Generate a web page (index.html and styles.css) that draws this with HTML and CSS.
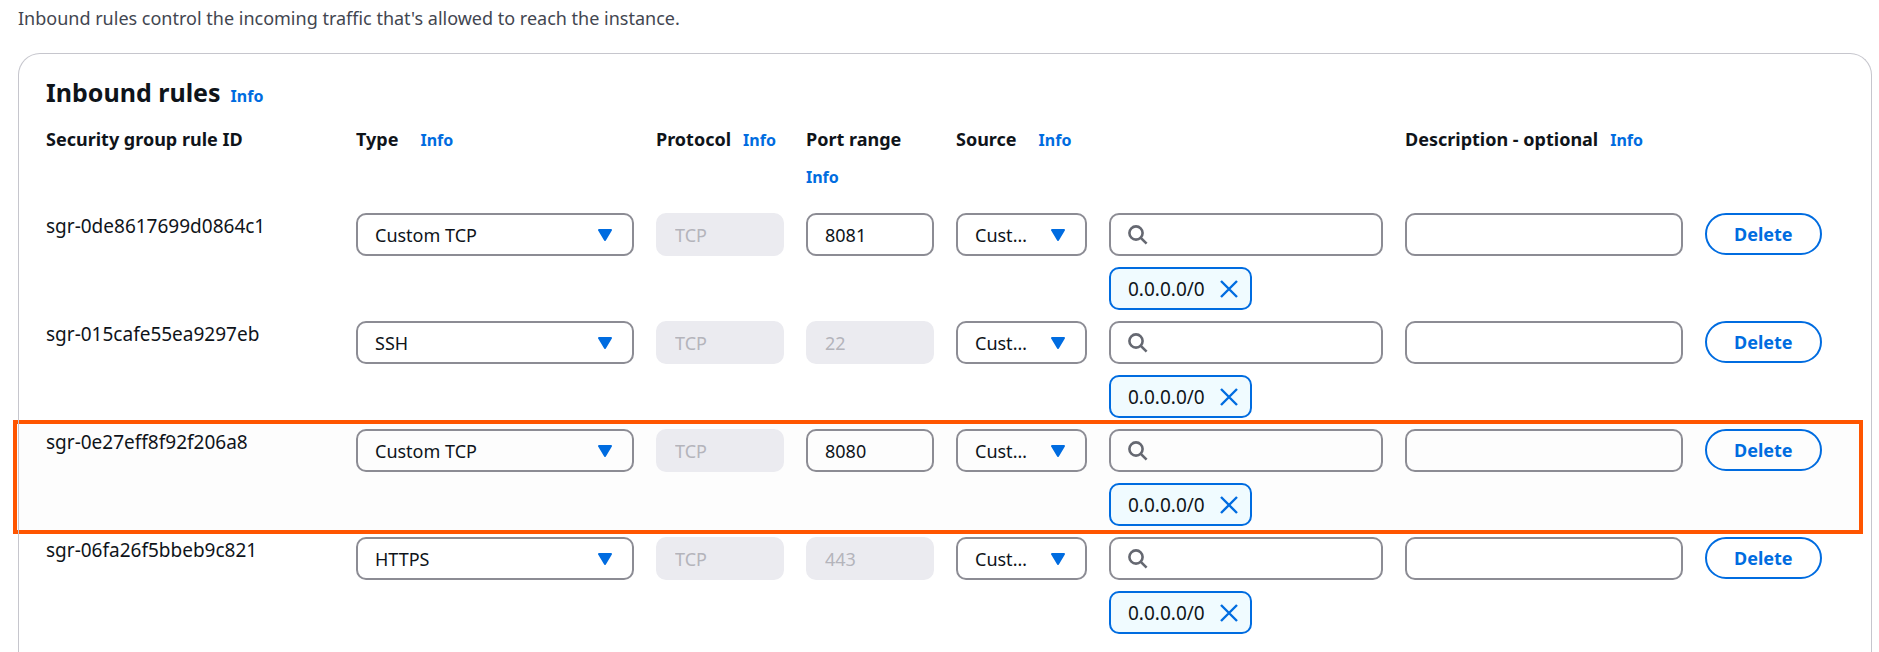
FILE: index.html
```html
<!DOCTYPE html>
<html lang="en">
<head>
<meta charset="utf-8">
<meta name="viewport" content="width=device-width, initial-scale=1">
<title>Inbound rules</title>
<link rel="stylesheet" href="styles.css">
</head>
<body>
<svg class="sprite" aria-hidden="true">
  <symbol id="search" viewBox="0 0 20 20"><circle cx="8" cy="8" r="6.6"/><path d="M12.8 12.8 18.6 18.6"/></symbol>
  <symbol id="close" viewBox="0 0 18 18"><path d="M1 1 17 17M17 1 1 17"/></symbol>
</svg>
<p class="intro">Inbound rules control the incoming traffic that's allowed to reach the instance.</p>
<main class="panel">
  <header class="panel-header">
    <h2 class="title">Inbound rules</h2>
    <a class="info" href="#">Info</a>
  </header>
  <table class="rules">
    <thead>
      <tr class="row head">
        <th class="label">Security group rule ID</th>
        <th class="label wide">Type <a class="info" href="#">Info</a></th>
        <th class="label">Protocol <a class="info" href="#">Info</a></th>
        <th class="label">Port range <a class="info" href="#">Info</a></th>
        <th class="label wide span" colspan="2">Source <a class="info" href="#">Info</a></th>
        <th class="label">Description - optional <a class="info" href="#">Info</a></th>
      </tr>
    </thead>
    <tbody>
      <tr class="row">
        <td class="id">sgr-0de8617699d0864c1</td>
        <td><select class="field select" aria-label="Type"><option>Custom TCP</option></select></td>
        <td><input class="field" aria-label="Protocol" value="TCP" disabled></td>
        <td><input class="field" aria-label="Port range" value="8081"></td>
        <td><select class="field select" aria-label="Source"><option>Custom</option></select></td>
        <td class="source">
          <label class="field search"><svg class="search-icon"><use href="#search"/></svg><input class="search-input" aria-label="Source address"></label>
          <span class="chip">0.0.0.0/0<button class="remove" aria-label="Remove 0.0.0.0/0"><svg class="close-icon"><use href="#close"/></svg></button></span>
        </td>
        <td><input class="field" aria-label="Description"></td>
        <td><button class="delete">Delete</button></td>
      </tr>
      <tr class="row">
        <td class="id">sgr-015cafe55ea9297eb</td>
        <td><select class="field select" aria-label="Type"><option>SSH</option></select></td>
        <td><input class="field" aria-label="Protocol" value="TCP" disabled></td>
        <td><input class="field" aria-label="Port range" value="22" disabled></td>
        <td><select class="field select" aria-label="Source"><option>Custom</option></select></td>
        <td class="source">
          <label class="field search"><svg class="search-icon"><use href="#search"/></svg><input class="search-input" aria-label="Source address"></label>
          <span class="chip">0.0.0.0/0<button class="remove" aria-label="Remove 0.0.0.0/0"><svg class="close-icon"><use href="#close"/></svg></button></span>
        </td>
        <td><input class="field" aria-label="Description"></td>
        <td><button class="delete">Delete</button></td>
      </tr>
      <tr class="row marked">
        <td class="id">sgr-0e27eff8f92f206a8</td>
        <td><select class="field select" aria-label="Type"><option>Custom TCP</option></select></td>
        <td><input class="field" aria-label="Protocol" value="TCP" disabled></td>
        <td><input class="field" aria-label="Port range" value="8080"></td>
        <td><select class="field select" aria-label="Source"><option>Custom</option></select></td>
        <td class="source">
          <label class="field search"><svg class="search-icon"><use href="#search"/></svg><input class="search-input" aria-label="Source address"></label>
          <span class="chip">0.0.0.0/0<button class="remove" aria-label="Remove 0.0.0.0/0"><svg class="close-icon"><use href="#close"/></svg></button></span>
        </td>
        <td><input class="field" aria-label="Description"></td>
        <td><button class="delete">Delete</button></td>
      </tr>
      <tr class="row">
        <td class="id">sgr-06fa26f5bbeb9c821</td>
        <td><select class="field select" aria-label="Type"><option>HTTPS</option></select></td>
        <td><input class="field" aria-label="Protocol" value="TCP" disabled></td>
        <td><input class="field" aria-label="Port range" value="443" disabled></td>
        <td><select class="field select" aria-label="Source"><option>Custom</option></select></td>
        <td class="source">
          <label class="field search"><svg class="search-icon"><use href="#search"/></svg><input class="search-input" aria-label="Source address"></label>
          <span class="chip">0.0.0.0/0<button class="remove" aria-label="Remove 0.0.0.0/0"><svg class="close-icon"><use href="#close"/></svg></button></span>
        </td>
        <td><input class="field" aria-label="Description"></td>
        <td><button class="delete">Delete</button></td>
      </tr>
    </tbody>
  </table>
</main>
</body>
</html>
```
FILE: styles.css
```css
* {
  box-sizing: border-box;
}

body {
  display: flex;
  flex-direction: column;
  min-height: 100vh;
  margin: 0;
  padding: 5px 7px 0 18px;
  background: #fff;
  color: #0f141a;
  font: 18px/26px "Noto Sans", "Open Sans", sans-serif;
}

.sprite {
  display: none;
}

.intro {
  margin: 0 0 22px;
  color: #424650;
}

.panel {
  flex: 1;
  padding: 21px 27px 0;
  border: 1px solid #c6c6cd;
  border-bottom: 0;
  border-radius: 22px 22px 0 0;
}

.panel-header {
  display: flex;
  align-items: baseline;
  gap: 10px;
}

.title {
  margin: 0;
  font-size: 25px;
  line-height: 34px;
  font-weight: 700;
}

.info {
  color: #006ce0;
  font-size: 16px;
  font-weight: 700;
  text-decoration: none;
}

.rules,
.rules thead,
.rules tbody {
  display: block;
}

.rules tbody {
  display: grid;
  gap: 11px;
}

.row {
  display: grid;
  grid-template-columns: 288fr 278fr 128fr 128fr 131fr 274fr 278fr 139fr;
  column-gap: 22px;
  position: relative;
}

.row > * {
  min-width: 0;
  padding: 0;
}

.head {
  padding: 11px 0 17px;
}

.label {
  display: flex;
  flex-wrap: wrap;
  align-items: baseline;
  align-content: flex-start;
  gap: 0 12px;
  font-weight: 700;
  line-height: 38px;
  text-align: left;
}

.wide {
  column-gap: 22px;
}

.span {
  grid-column: span 2;
}

.id,
.chip {
  font-size: 19px;
}

.field {
  display: block;
  width: 100%;
  height: 43px;
  margin: 0;
  padding: 0 17px;
  border: 2px solid #8c8c94;
  border-radius: 10px;
  background-color: transparent;
  color: inherit;
  font: inherit;
}

.field:disabled {
  border-color: #ebebf0;
  background-color: #ebebf0;
  color: #b4b4bb;
}

.select {
  appearance: none;
  padding-right: 50px;
  background-image: url("data:image/svg+xml,%3Csvg xmlns='http://www.w3.org/2000/svg' width='14' height='12'%3E%3Cpath d='M1 1h12L7 11z' fill='%23006ce0' stroke='%23006ce0' stroke-width='2' stroke-linejoin='round'/%3E%3C/svg%3E");
  background-repeat: no-repeat;
  background-position: right 20px center;
  text-overflow: ellipsis;
}

.source {
  display: grid;
  grid-template-columns: minmax(0, 1fr);
  justify-items: start;
  gap: 11px;
}

.search {
  display: flex;
  align-items: center;
  gap: 10px;
}

.search-icon {
  flex: none;
  width: 20px;
  height: 20px;
  fill: none;
  stroke: #656871;
  stroke-width: 2.6;
}

.search-input {
  flex: 1;
  width: 100%;
  min-width: 0;
  padding: 0;
  border: 0;
  outline: 0;
  background: transparent;
  font: inherit;
}

.chip {
  display: flex;
  align-items: center;
  gap: 15px;
  height: 43px;
  padding: 0 12px 0 17px;
  border: 2px solid #006ce0;
  border-radius: 10px;
  background: #f0fbff;
}

.remove {
  display: flex;
  padding: 0;
  border: 0;
  background: none;
}

.close-icon {
  width: 18px;
  height: 18px;
  fill: none;
  stroke: #006ce0;
  stroke-width: 2.4;
}

.delete {
  height: 42px;
  padding: 0 27px;
  border: 2px solid #006ce0;
  border-radius: 21px;
  background: transparent;
  color: #006ce0;
  font: inherit;
  font-weight: 700;
}

.marked::before {
  content: "";
  position: absolute;
  z-index: -1;
  inset: -9px -19px -8px -33px;
  border: 4px solid #ff5500;
  background: #fdfdfd;
}
```
